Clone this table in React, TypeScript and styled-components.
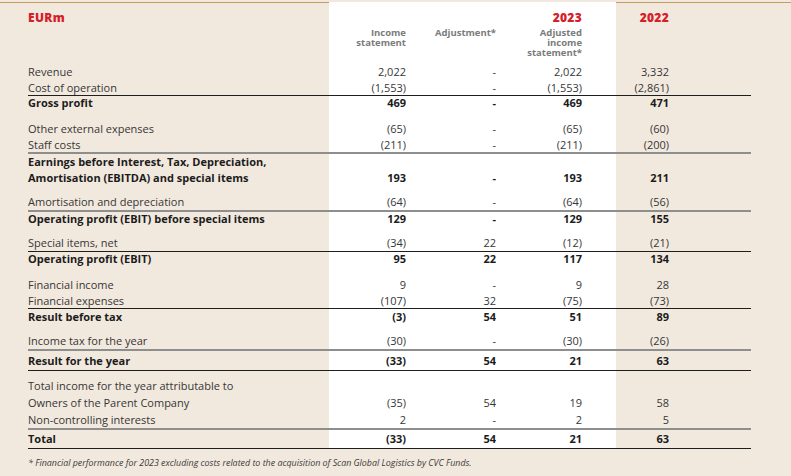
import * as React from 'react';
import styled, { createGlobalStyle } from 'styled-components';

type Rule = 'soft' | 'hard';

interface Line {
  label: string;
  values: string[];
  bold?: boolean;
  h: number;
  gap?: number;
  rule?: Rule;
}

const GlobalStyle = createGlobalStyle`
  html, body {
    margin: 0;
    padding: 0;
    background: #f2e9de;
  }

  body {
    font-family: 'Open Sans', 'Noto Sans', 'Liberation Sans', sans-serif;
    color: #3a3a3a;
  }
`;

const COLUMNS = '301px 77px 90px 120px 135px';

// right padding per value column; the first three sit on the white band
const VALUE_COLUMNS = [
  { white: true, pad: 0 },
  { white: true, pad: 0 },
  { white: true, pad: 34 },
  { white: false, pad: 82 }
];

const Page = styled.div`
  width: 791px;
  height: 476px;
  padding-top: 2px;
  box-sizing: border-box;
  overflow: hidden;
`;

const Sheet = styled.div`
  border-top: 1px solid #c99a62;
  padding-left: 28px;
`;

const Table = styled.div`
  margin-top: -1px;
  width: 723px;
`;

const HeaderRow = styled.div`
  display: grid;
  grid-template-columns: ${COLUMNS};
  height: 62px;
`;

const HeaderCell = styled.div<{ $white?: boolean; $pad?: number; $left?: boolean }>`
  display: flex;
  flex-direction: column;
  align-items: ${p => (p.$left ? 'flex-start' : 'flex-end')};
  padding-top: 9px;
  padding-right: ${p => p.$pad || 0}px;
  background: ${p => (p.$white ? '#fff' : 'transparent')};
`;

const Year = styled.div`
  height: 14px;
  margin-bottom: 3px;
  font-size: 12px;
  line-height: 14px;
  font-weight: 800;
  letter-spacing: 0.3px;
  color: #d5202c;
`;

const SubLabel = styled.div`
  font-size: 9.5px;
  line-height: 10px;
  font-weight: 700;
  color: #7b7b7b;
  text-align: right;
  white-space: pre-line;
`;

const Row = styled.div<{ $rule?: Rule }>`
  display: grid;
  grid-template-columns: ${COLUMNS};
  border-bottom: ${p =>
    p.$rule === 'soft' ? '2px solid #8e8e8e' : p.$rule === 'hard' ? '1px solid #1e1e1e' : 'none'};
`;

const Cell = styled.div<{
  $white?: boolean;
  $pad?: number;
  $left?: boolean;
  $bold?: boolean;
  $h: number;
  $gap?: number;
  $tall?: boolean;
}>`
  display: flex;
  align-items: ${p => (p.$tall ? (p.$left ? 'flex-start' : 'flex-end') : 'center')};
  justify-content: ${p => (p.$left ? 'flex-start' : 'flex-end')};
  height: ${p => p.$h}px;
  padding-top: ${p => p.$gap || 0}px;
  padding-right: ${p => p.$pad || 0}px;
  background: ${p => (p.$white ? '#fff' : 'transparent')};
  font-size: 11px;
  line-height: 16px;
  font-weight: ${p => (p.$bold ? 700 : 400)};
  color: ${p => (p.$bold ? '#1c1c1c' : '#363636')};
  white-space: pre-line;
`;

const Footnote = styled.div`
  margin-top: 8px;
  font-size: 8.9px;
  line-height: 11px;
  font-style: italic;
  color: #3a3a3a;
`;

const LINES: Line[] = [
  { label: 'Revenue', values: ['2,022', '-', '2,022', '3,332'], h: 16 },
  { label: 'Cost of operation', values: ['(1,553)', '-', '(1,553)', '(2,861)'], h: 15, rule: 'hard' },
  { label: 'Gross profit', values: ['469', '-', '469', '471'], bold: true, h: 13 },
  { label: 'Other external expenses', values: ['(65)', '-', '(65)', '(60)'], gap: 12, h: 16 },
  { label: 'Staff costs', values: ['(211)', '-', '(211)', '(200)'], h: 15, rule: 'soft' },
  {
    label: 'Earnings before Interest, Tax, Depreciation,\nAmortisation (EBITDA) and special items',
    values: ['193', '-', '193', '211'],
    bold: true,
    h: 32
  },
  { label: 'Amortisation and depreciation', values: ['(64)', '-', '(64)', '(56)'], gap: 8, h: 16, rule: 'soft' },
  { label: 'Operating profit (EBIT) before special items', values: ['129', '-', '129', '155'], bold: true, h: 13 },
  { label: 'Special items, net', values: ['(34)', '22', '(12)', '(21)'], gap: 10, h: 16, rule: 'hard' },
  { label: 'Operating profit (EBIT)', values: ['95', '22', '117', '134'], bold: true, h: 13 },
  { label: 'Financial income', values: ['9', '-', '9', '28'], gap: 12, h: 16 },
  { label: 'Financial expenses', values: ['(107)', '32', '(75)', '(73)'], h: 15, rule: 'hard' },
  { label: 'Result before tax', values: ['(3)', '54', '51', '89'], bold: true, h: 15 },
  { label: 'Income tax for the year', values: ['(30)', '-', '(30)', '(26)'], gap: 9, h: 16, rule: 'soft' },
  { label: 'Result for the year', values: ['(33)', '54', '21', '63'], bold: true, h: 19, rule: 'hard' },
  { label: 'Total income for the year attributable to', values: ['', '', '', ''], gap: 7, h: 16 },
  { label: 'Owners of the Parent Company', values: ['(35)', '54', '19', '58'], h: 18 },
  { label: 'Non-controlling interests', values: ['2', '-', '2', '5'], h: 16, rule: 'soft' },
  { label: 'Total', values: ['(33)', '54', '21', '63'], bold: true, h: 18, rule: 'hard' }
];

const HEADERS = [
  { year: '', sub: 'Income\nstatement' },
  { year: '', sub: 'Adjustment*' },
  { year: '2023', sub: 'Adjusted\nincome\nstatement*' },
  { year: '2022', sub: '' }
];

export default function App() {
  return (
    <Page>
      <GlobalStyle />
      <Sheet>
        <Table>
          <HeaderRow>
            <HeaderCell $left>
              <Year>EURm</Year>
            </HeaderCell>
            {HEADERS.map((head, i) => (
              <HeaderCell key={i} $white={VALUE_COLUMNS[i].white} $pad={VALUE_COLUMNS[i].pad}>
                <Year>{head.year}</Year>
                <SubLabel>{head.sub}</SubLabel>
              </HeaderCell>
            ))}
          </HeaderRow>

          {LINES.map(line => {
            const tall = line.h > 20;
            return (
              <Row key={line.label} $rule={line.rule}>
                <Cell $left $bold={line.bold} $h={line.h} $gap={line.gap} $tall={tall}>
                  {line.label}
                </Cell>
                {line.values.map((value, i) => (
                  <Cell
                    key={i}
                    $white={VALUE_COLUMNS[i].white}
                    $pad={VALUE_COLUMNS[i].pad}
                    $bold={line.bold}
                    $h={line.h}
                    $gap={line.gap}
                    $tall={tall}
                  >
                    {value}
                  </Cell>
                ))}
              </Row>
            );
          })}
        </Table>
        <Footnote>
          * Financial performance for 2023 excluding costs related to the acquisition of Scan Global Logistics by CVC Funds.
        </Footnote>
      </Sheet>
    </Page>
  );
}
